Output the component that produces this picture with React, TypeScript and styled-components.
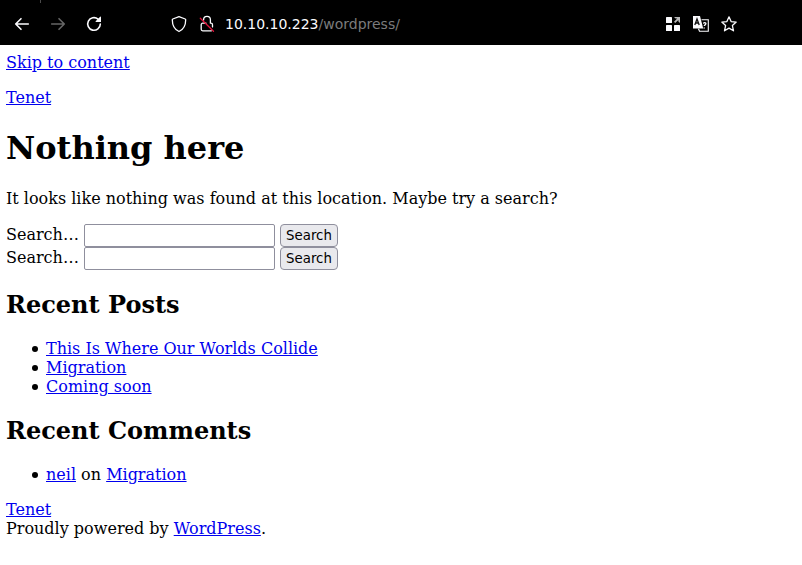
import React from "react";
import styled, { createGlobalStyle } from "styled-components";

const GlobalStyle = createGlobalStyle`
  * { box-sizing: border-box; }
  html, body { margin: 0; background: #fff; overflow: hidden; }
`;

const Browser = styled.div`
  width: 802px;
  height: 565px;
  background: #fff;
  overflow: hidden;
`;

const Toolbar = styled.header`
  height: 45px;
  padding: 3px 64px 0 13px;
  background: #000;
  color: #fbfbfe;
  display: flex;
  align-items: center;
  position: relative;
`;

const TabDivider = styled.span`
  position: absolute;
  left: 40px;
  top: 0;
  width: 1px;
  height: 3px;
  background: #4a4a4a;
`;

const NavGroup = styled.nav`
  display: flex;
  gap: 18px;
  width: 157px;
`;

const IconButton = styled.button<{ $dim?: boolean }>`
  width: 18px;
  height: 18px;
  padding: 0;
  border: 0;
  background: none;
  display: grid;
  place-items: center;
  color: ${(p) => (p.$dim ? "#666" : "#fbfbfe")};
  svg { display: block; }
`;

const SiteIcons = styled.div`
  display: flex;
  gap: 10px;
  width: 55px;
`;

const Address = styled.div`
  flex: 1;
  font: 14px/20px "DejaVu Sans", sans-serif;
  color: #fbfbfe;
  white-space: nowrap;
`;

const Path = styled.span`
  color: #7b7b7c;
`;

const PageActions = styled.div`
  display: flex;
  gap: 10px;
`;

const Page = styled.main`
  padding: 8px 6px;
  font: 16px/19px "DejaVu Serif", serif;
  color: #000;
`;

const Link = styled.a`
  color: #0000ee;
  text-decoration: underline;
`;

const Paragraph = styled.p`
  margin: 16px 0;
`;

const Title = styled.h1`
  margin: 22px 0 21px;
  font-size: 32px;
  line-height: 39px;
`;

const Heading = styled.h2`
  margin: 21px 0 20px;
  font-size: 24px;
  line-height: 28px;
`;

const List = styled.ul`
  margin: 0 0 16px;
  padding-left: 26px;
  list-style: none;
`;

const Item = styled.li`
  display: flex;
  white-space: pre;
  &::before {
    content: "";
    width: 6px;
    height: 6px;
    margin: 7px 8px 0 0;
    border-radius: 50%;
    background: #000;
  }
`;

const SearchRow = styled.form`
  display: flex;
  height: 23px;
`;

const SearchLabel = styled.label`
  width: 78px;
  line-height: 21px;
`;

const SearchInput = styled.input`
  width: 191px;
  height: 23px;
  margin: 0 5px 0 0;
  border: 1px solid #8f8f9d;
  border-radius: 2px;
  background: #fff;
`;

const SearchButton = styled.button`
  width: 58px;
  height: 23px;
  padding: 0;
  border: 1px solid #8f8f9d;
  border-radius: 4px;
  background: #e9e9ed;
  color: #000;
  font: 13.333px/20px "DejaVu Sans", sans-serif;
`;

const stroke = {
  fill: "none",
  stroke: "currentColor",
  strokeWidth: 1.6,
  strokeLinecap: "round" as const,
  strokeLinejoin: "round" as const,
};

const Arrow = ({ forward = false }: { forward?: boolean }) => (
  <svg width="18" height="18" viewBox="0 0 18 18" {...stroke}>
    <path d={forward ? "M2.7 9h12.6M10 3.7 15.3 9 10 14.3" : "M15.3 9h-12.6M8 3.7 2.7 9 8 14.3"} />
  </svg>
);

const Reload = () => (
  <svg width="18" height="18" viewBox="0 0 18 18" {...stroke}>
    <path d="M13 4.1A6.3 6.3 0 1 0 15.3 9" />
    <path d="M15.4 1.6q.6 0 .6.6v4.7H11q-.7 0-.4-.6Z" fill="currentColor" stroke="none" />
  </svg>
);

const Shield = () => (
  <svg width="18" height="18" viewBox="0 0 18 18" {...stroke} strokeWidth={1.3}>
    <path d="M9 1.6 15.2 4q.5.2.5.7c0 4.9-1.7 9.5-6.7 11.8C4 14.2 2.3 9.6 2.3 4.7q0-.5.5-.7Z" />
  </svg>
);

const InsecureLock = () => (
  <svg width="18" height="18" viewBox="0 0 18 18" {...stroke} strokeWidth={1.3}>
    <path d="M5.6 5V4.7a3.4 3.4 0 0 1 6.8 0V8.2H13a1.5 1.5 0 0 1 1.5 1.5v2.2M8 8.2H4.7a1.5 1.5 0 0 0-1.5 1.5v4.6a1.5 1.5 0 0 0 1.5 1.5h8.7" />
    <path d="m2.3 3.2 13.2 13" stroke="#e2143c" />
  </svg>
);

const Containers = () => (
  <svg width="18" height="18" viewBox="0 0 18 18">
    <g fill="#fbfbfe">
      <rect x="2" y="2" width="6" height="6" rx="0.6" />
      <rect x="2" y="10" width="6" height="6" rx="0.6" />
      <rect x="10" y="10" width="6" height="6" rx="0.6" />
    </g>
    <path d="M10 2h6v6l-1.6-1.6V4.9L11.2 8 10 6.8l3.2-3.2h-1.6Z" fill="#b8b8b8" />
  </svg>
);

const Translate = () => (
  <svg width="18" height="18" viewBox="0 0 18 18">
    <path d="M9.5 4.7h6.8v11.6H7.5l-1-2.5" fill="#000" stroke="#fbfbfe" strokeWidth="1.1" />
    <path d="M1 1h7l3.2 12.5H1Z" fill="#fbfbfe" />
    <path d="m2.8 10 2.2-6 2.2 6M3.6 8h2.8" fill="none" stroke="#111" strokeWidth="1.3" />
    <path d="M11.3 8.5q1.5-1.6 2.5-.4c.7 1.2-1.5 1.7-1.5 3M12.2 12.4v1" fill="none" stroke="#fbfbfe" strokeWidth="1.4" />
  </svg>
);

const Star = () => (
  <svg width="18" height="18" viewBox="0 0 18 18" {...stroke} strokeWidth={1.3}>
    <path d="m9 1.8 2.1 4.8 5.1.5-3.8 3.5 1.1 5.2L9 13.1l-4.5 2.7 1.1-5.2-3.8-3.5 5.1-.5Z" />
  </svg>
);

const Search = () => (
  <SearchRow>
    <SearchLabel>Search…</SearchLabel>
    <SearchInput aria-label="Search" />
    <SearchButton type="button">Search</SearchButton>
  </SearchRow>
);

const posts = ["This Is Where Our Worlds Collide", "Migration", "Coming soon"];

export default function App() {
  return (
    <Browser>
      <GlobalStyle />
      <Toolbar>
        <TabDivider />
        <NavGroup>
          <IconButton aria-label="Back"><Arrow /></IconButton>
          <IconButton aria-label="Forward" $dim><Arrow forward /></IconButton>
          <IconButton aria-label="Reload"><Reload /></IconButton>
        </NavGroup>
        <SiteIcons>
          <IconButton aria-label="Tracking protection"><Shield /></IconButton>
          <IconButton aria-label="Connection not secure"><InsecureLock /></IconButton>
        </SiteIcons>
        <Address>10.10.10.223<Path>/wordpress/</Path></Address>
        <PageActions>
          <IconButton aria-label="Containers"><Containers /></IconButton>
          <IconButton aria-label="Translate"><Translate /></IconButton>
          <IconButton aria-label="Bookmark"><Star /></IconButton>
        </PageActions>
      </Toolbar>
      <Page>
        <Link href="#content">Skip to content</Link>
        <Paragraph><Link href="#">Tenet</Link></Paragraph>
        <Title>Nothing here</Title>
        <Paragraph>It looks like nothing was found at this location. Maybe try a search?</Paragraph>
        <Search />
        <Search />
        <Heading>Recent Posts</Heading>
        <List>
          {posts.map((post) => (
            <Item key={post}><Link href="#">{post}</Link></Item>
          ))}
        </List>
        <Heading>Recent Comments</Heading>
        <List>
          <Item><Link href="#">neil</Link> on <Link href="#">Migration</Link></Item>
        </List>
        <div><Link href="#">Tenet</Link></div>
        <div>Proudly powered by <Link href="#">WordPress</Link>.</div>
      </Page>
    </Browser>
  );
}
